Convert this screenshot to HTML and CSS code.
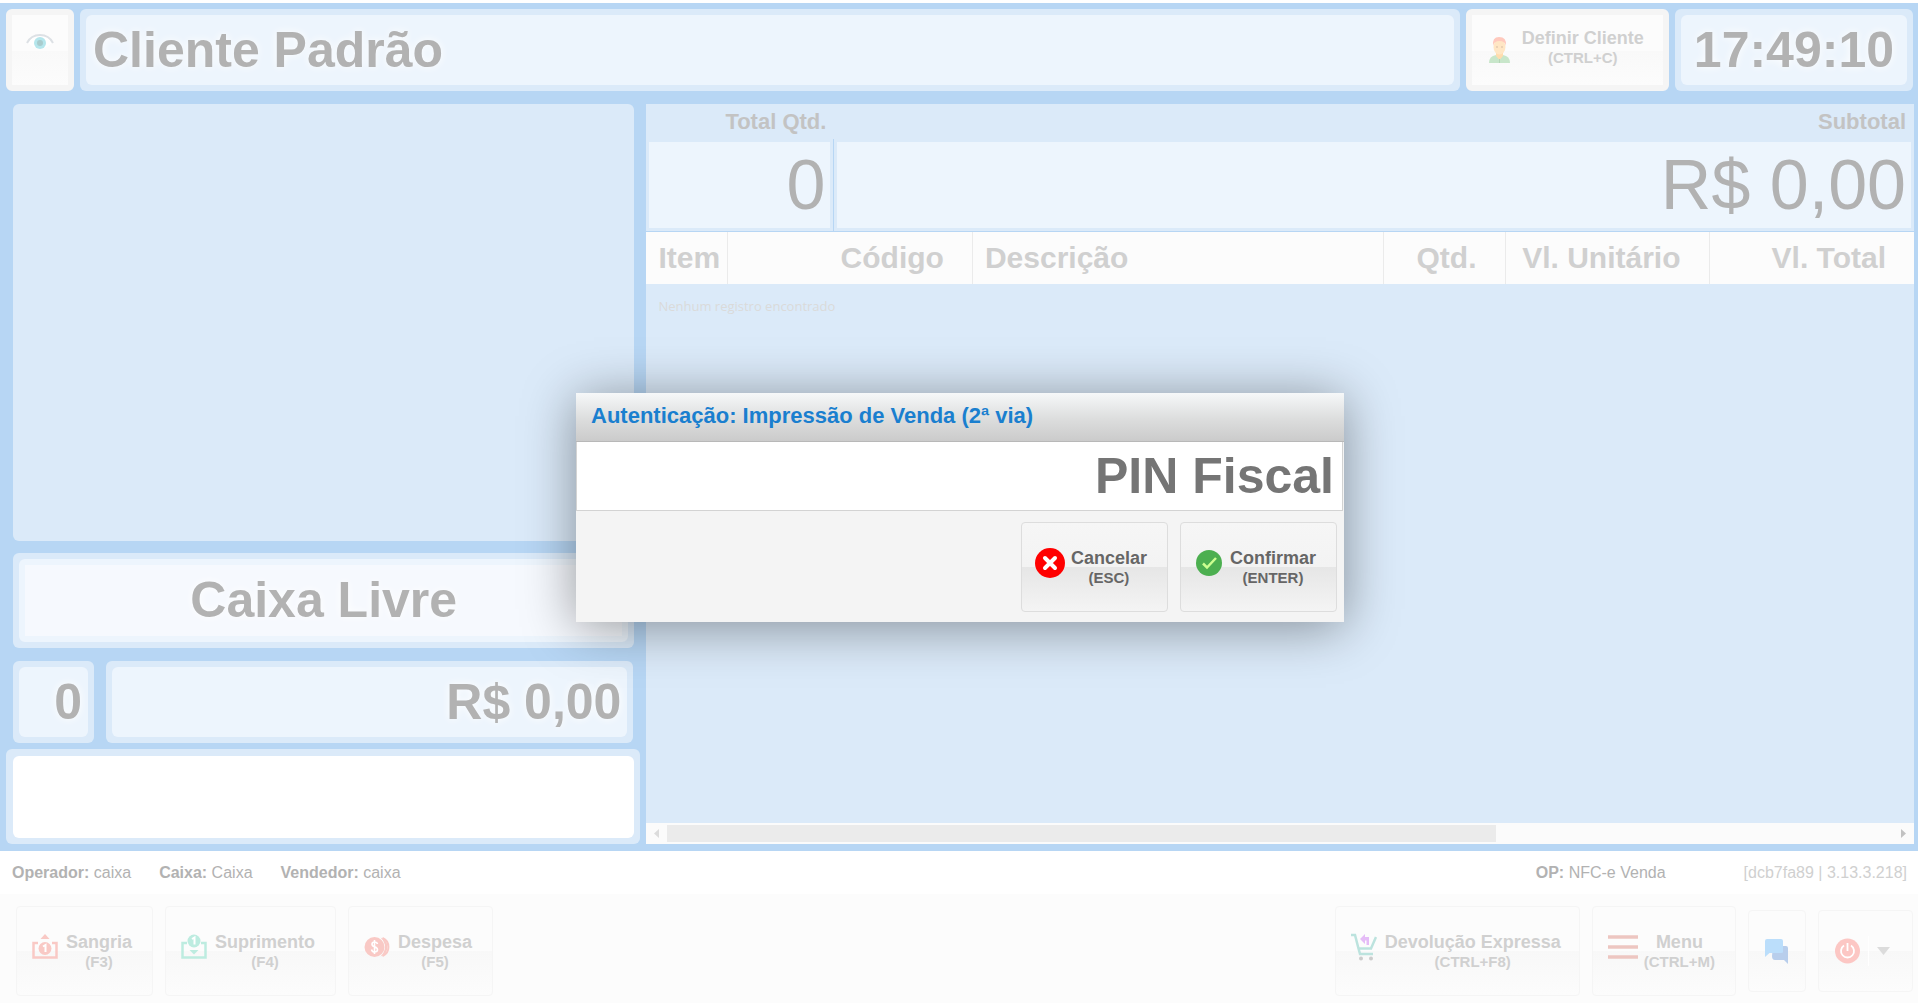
FILE: index.html
```html
<!DOCTYPE html>
<html lang="pt-BR">

<head>
    <meta charset="UTF-8">
    <meta name="viewport" content="width=device-width, initial-scale=1.0">
    <title>Caixa</title>
    <link rel="stylesheet" href="styles.css">
</head>

<body>
    <div id="pdv">
        <header class="topo">
            <button class="btnTopo btnOlho" aria-label="Exibir">
                <svg width="28" height="18" viewBox="0 0 28 18">
                    <path d="M1 9Q14 -6 27 9Q14 22 1 9Z" fill="#fff" />
                    <path d="M1 10Q5 2 14 2T27 10" fill="none" stroke="#dde1e5" stroke-width="2" />
                    <circle cx="14" cy="10" r="6" fill="#b5e6ec" />
                    <circle cx="14" cy="10" r="3" fill="#a9cccd" />
                </svg>
            </button>
            <div class="caixa cliente"><div>Cliente Padrão</div></div>
            <button class="btnTopo">
                <svg width="21" height="26" viewBox="0 0 21 26">
                    <path d="M0 26Q0 19 7 18H14Q21 19 21 26Z" fill="#c8e6ca" />
                    <path d="M7 15H14V19L10.500 23L7 19Z" fill="#ffdcae" />
                    <path d="M10.500 22V26" stroke="#b5d5b6" />
                    <ellipse cx="10.500" cy="10" rx="6" ry="7.500" fill="#ffe6c4" />
                    <path d="M4 9Q3 0 10 0Q18 0 17 9Q16 4 10.500 4Q5 4 4 9Z" fill="#ffc9bd" />
                    <path d="M8 9V11M13 9V11" stroke="#d8bda5" />
                </svg>
                <span class="rotulo">Definir Cliente<small>(CTRL+C)</small></span>
            </button>
            <div class="caixa relogio"><div>17:49:10</div></div>
        </header>

        <main class="conteudo">
            <section class="esquerda">
                <div class="painel"></div>
                <div class="caixa estado"><div>Caixa Livre</div></div>
                <div class="valores">
                    <div class="caixa quantidade"><div>0</div></div>
                    <div class="caixa valor"><div>R$ 0,00</div></div>
                </div>
                <div class="moldura">
                    <input class="entrada" type="text" aria-label="Código do produto">
                </div>
            </section>

            <section class="direita">
                <div class="totais">
                    <div class="rotuloTotal">Total Qtd.</div>
                    <div class="rotuloTotal">Subtotal</div>
                    <div class="total separador"><div>0</div></div>
                    <div class="total"><div>R$ 0,00</div></div>
                </div>
                <table class="itens">
                    <colgroup>
                        <col class="colItem">
                        <col class="colCodigo">
                        <col class="colDescricao">
                        <col class="colQtd">
                        <col class="colUnitario">
                        <col class="colTotal">
                    </colgroup>
                    <thead>
                        <tr>
                            <th class="texto">Item</th>
                            <th>Código</th>
                            <th class="texto">Descrição</th>
                            <th>Qtd.</th>
                            <th>Vl. Unitário</th>
                            <th>Vl. Total</th>
                        </tr>
                    </thead>
                    <tbody>
                        <tr>
                            <td colspan="6">Nenhum registro encontrado</td>
                        </tr>
                    </tbody>
                </table>
                <div class="rolagem">
                    <svg width="21" height="21" viewBox="0 0 21 21"><path d="M13 6V15L8 10.500Z" fill="#dcdcdc" /></svg>
                    <div class="trilho"><div class="polegar"></div></div>
                    <svg width="21" height="21" viewBox="0 0 21 21"><path d="M8 6V15L13 10.500Z" fill="#c2c2c2" /></svg>
                </div>
            </section>
        </main>

        <div class="info">
            <span><b>Operador:</b> caixa</span>
            <span><b>Caixa:</b> Caixa</span>
            <span><b>Vendedor:</b> caixa</span>
            <span class="operacao"><b>OP:</b> NFC-e Venda</span>
            <span class="versao">[dcb7fa89 | 3.13.3.218]</span>
        </div>

        <footer class="rodape">
            <button class="btn">
                <svg width="26" height="26" viewBox="0 0 26 26">
                    <path d="M6 9H1.500V23.500H24.500V9H20" fill="none" stroke="#f9c9c5" stroke-width="2.500" />
                    <path d="M8.500 5L13 0L17.500 5Z" fill="#f9c9c5" />
                    <circle cx="13" cy="14.500" r="6.500" fill="#f9c9c5" />
                    <path d="M11 12.500L13.500 11V18" fill="none" stroke="#fff" stroke-width="2" />
                </svg>
                <span class="rotulo">Sangria<small>(F3)</small></span>
            </button>
            <button class="btn">
                <svg width="26" height="26" viewBox="0 0 26 26">
                    <path d="M6 9H1.500V23.500H24.500V9H20" fill="none" stroke="#bdece0" stroke-width="2.500" />
                    <circle cx="13" cy="7" r="6.500" fill="#bdece0" />
                    <path d="M11 5L13.500 3.500V10.500" fill="none" stroke="#fff" stroke-width="2" />
                    <path d="M8.500 16H17.500L13 20.500Z" fill="#bdece0" />
                </svg>
                <span class="rotulo">Suprimento<small>(F4)</small></span>
            </button>
            <button class="btn">
                <svg width="26" height="26" viewBox="0 0 26 26">
                    <path d="M16.500 3.500A10 10 0 0 1 16.500 22.500Q21 18 21 13T16.500 3.500Z" fill="#f9c9c5" />
                    <path d="M18.500 4A9.800 9.800 0 0 1 18.500 22" fill="none" stroke="#f9c9c5" stroke-width="2" />
                    <circle cx="10.500" cy="13" r="10" fill="#f9c9c5" />
                    <path d="M13.500 10Q13 8 10.500 8Q8 8 8 10.200Q8 12 10.500 12.800Q13.500 13.600 13.500 15.800Q13.500 18 10.500 18Q8 18 7.500 15.500M10.500 6V20" fill="none" stroke="#fff" stroke-width="1.600" />
                </svg>
                <span class="rotulo">Despesa<small>(F5)</small></span>
            </button>
            <button class="btn btnDevolucao">
                <svg width="26" height="28" viewBox="0 0 26 28">
                    <path d="M0 2H4L7.500 15.500H20L25 4M7.500 15.500L9 21H22" fill="none" stroke="#bce3de" stroke-width="2.500" />
                    <path d="M9 6L14 1V4H18V12H15.500V7.500H14V11Z" fill="#e5bcf7" />
                    <circle cx="10" cy="25.500" r="2" fill="#ccc" />
                    <circle cx="20" cy="25.500" r="2" fill="#ccc" />
                </svg>
                <span class="rotulo">Devolução Expressa<small>(CTRL+F8)</small></span>
            </button>
            <button class="btn btnMenu">
                <svg width="30" height="28" viewBox="0 0 30 28">
                    <path d="M0 4H30M0 14H30M0 24H30" stroke="#edc6c1" stroke-width="3.500" />
                </svg>
                <span class="rotulo">Menu<small>(CTRL+M)</small></span>
            </button>
            <button class="btn btnPequeno btnChat" aria-label="Mensagens">
                <svg width="24" height="26" viewBox="0 0 24 26">
                    <path d="M8 8H21Q23 8 23 10V26L19 22H10Q7 22 7 18Z" fill="#b8ceec" />
                    <path d="M2 1H16Q18 1 18 3V14Q18 15 16 15H4.500L0 19V3Q0 1 2 1Z" fill="#bbdefb" />
                </svg>
            </button>
            <button class="btn btnPequeno btnSair" aria-label="Sair">
                <svg width="25" height="26" viewBox="0 0 25 26">
                    <circle cx="12.500" cy="13" r="12.500" fill="#fcc7c4" />
                    <path d="M9 7.500A6.500 6.500 0 1 0 16 7.500M12.500 5V13" fill="none" stroke="#fff" stroke-width="1.800" />
                </svg>
                <span class="divisor"></span>
                <svg width="13" height="8" viewBox="0 0 13 8"><path d="M0 0H13L6.500 8Z" fill="#dcdcdc" /></svg>
            </button>
        </footer>
    </div>

    <div class="dialogo" role="dialog" aria-labelledby="tituloDialogo">
        <div class="titulo" id="tituloDialogo">Autenticação: Impressão de Venda (2ª via)</div>
        <input class="pin" type="text" placeholder="PIN Fiscal" aria-label="PIN Fiscal">
        <div class="acoes">
            <button class="btn btnAcao">
                <svg width="30" height="30" viewBox="0 0 30 30">
                    <circle cx="15" cy="15" r="15" fill="#f00" />
                    <path d="M10 10L20 20M20 10L10 20" stroke="#fff" stroke-width="4" stroke-linecap="round" />
                </svg>
                <span class="rotulo">Cancelar<small>(ESC)</small></span>
            </button>
            <button class="btn btnAcao">
                <svg width="30" height="30" viewBox="0 0 30 30">
                    <circle cx="15" cy="15" r="13" fill="#4caf50" />
                    <path d="M9 15.500L13 19.500L22 10" fill="none" stroke="#ccff90" stroke-width="2.500" />
                </svg>
                <span class="rotulo">Confirmar<small>(ENTER)</small></span>
            </button>
        </div>
    </div>
</body>

</html>
```
FILE: styles.css
```css
* {
    box-sizing: border-box;
}

body {
    margin: 0;
    font-family: "Liberation Sans", Arial, sans-serif;
    color: #b2b2b2;
    background-color: #fff;
}

button,
input {
    font-family: inherit;
    margin: 0;
}

svg {
    display: block;
    flex: none;
}

#pdv {
    display: flex;
    flex-direction: column;
    height: 100vh;
    padding-top: 3px;
    overflow: hidden;
}

/* topo */
.topo {
    display: flex;
    gap: 6px;
    padding: 6px 5px 13px 6px;
    background-color: #b7d6f4;
}

.caixa {
    padding: 6px;
    border-radius: 6px;
    background-color: #dbeaf9;
    font-size: 50px;
    font-weight: bold;
    line-height: 70px;
    text-shadow: 0 0 8px #fff;
    white-space: nowrap;
}

.caixa div {
    height: 70px;
    border-radius: 6px;
    background-color: #edf5fd;
}

.cliente {
    flex: 1;
}

.cliente div {
    padding-left: 7px;
}

.relogio div {
    padding: 0 13px;
}

.btnTopo {
    display: flex;
    align-items: center;
    gap: 12px;
    height: 82px;
    padding: 0 19px 0 17px;
    border: 6px solid #f5f5f5;
    border-radius: 6px;
    background: linear-gradient(#fcfcfc 52%, #f9f9f9 52%, #fcfcfc);
}

.btnTopo .rotulo {
    padding-bottom: 5px;
}

.btnOlho {
    padding: 0 14px 16px;
}

.rotulo {
    color: #d0d0d0;
    font-size: 18px;
    font-weight: bold;
    line-height: 20px;
    text-align: center;
    white-space: nowrap;
}

.rotulo small {
    display: block;
    font-size: 15px;
}

/* conteudo */
.conteudo {
    flex: 1;
    display: flex;
    gap: 6px;
    min-height: 0;
    padding: 0 4px 7px 6px;
    background-color: #b7d6f4;
}

.esquerda {
    display: flex;
    flex-direction: column;
    width: 33.25%;
}

.painel {
    flex: 1;
    margin: 0 6px 12px 7px;
    border-radius: 6px;
    background-color: #dbeaf9;
}

.estado {
    margin: 0 6px 13px 7px;
    text-align: center;
}

.estado div {
    height: 83px;
    border: 6px solid #edf5fd;
    background-color: #f6f9fe;
}

.valores {
    display: flex;
    gap: 12px;
    margin: 0 7px 6px;
    text-align: right;
}

.valores div div {
    padding-right: 6px;
}

.quantidade {
    width: 81px;
}

.valor {
    flex: 1;
}

.moldura {
    height: 95px;
    padding: 7px 6px 6px 7px;
    border-radius: 6px;
    background-color: #dbeaf9;
}

.entrada {
    display: block;
    width: 100%;
    height: 100%;
    border: none;
    border-radius: 6px;
    background-color: #fff;
    font-size: 50px;
    outline: none;
}

.direita {
    flex: 1;
    display: flex;
    flex-direction: column;
    min-width: 0;
    background-color: #dbeaf9;
}

.totais {
    display: grid;
    grid-template-columns: 188px 1fr;
    border-bottom: 1px solid #b7d6f4;
    text-align: right;
}

.rotuloTotal {
    height: 35px;
    padding: 0 8px;
    color: #c3c3c3;
    font-size: 22px;
    font-weight: bold;
    line-height: 35px;
}

.total {
    padding: 3px;
    font-size: 70px;
    line-height: 86px;
}

.total div {
    height: 86px;
    padding-right: 5px;
    background-color: #edf5fd;
}

.separador {
    border-right: 1px solid #b7d6f4;
}

.itens {
    width: 100%;
    table-layout: fixed;
    border-collapse: collapse;
}

.itens th {
    height: 52px;
    padding: 0 28px 0 0;
    border-right: 1px solid #ebebeb;
    background-color: #fcfcfc;
    color: #d0d0d0;
    font-size: 30px;
    text-align: right;
    white-space: nowrap;
}

.itens th:last-child {
    border-right: none;
}

.itens .texto {
    padding: 0 0 0 12px;
    text-align: left;
}

.itens td {
    padding: 12px;
    color: #dadada;
    font-family: "Open Sans", "Noto Sans", sans-serif;
    font-size: 13px;
    line-height: 20px;
}

.colItem {
    width: 81px;
}

.colCodigo {
    width: 245px;
}

.colQtd {
    width: 122px;
}

.colUnitario {
    width: 204px;
}

.colTotal {
    width: 205px;
}

.rolagem {
    display: flex;
    height: 21px;
    margin-top: auto;
    background-color: #fbfbfb;
}

.trilho {
    flex: 1;
    padding: 2px 0;
}

.polegar {
    width: 67.6%;
    height: 17px;
    background-color: #ebebeb;
}

/* barra de informacoes */
.info {
    display: flex;
    gap: 28px;
    height: 43px;
    padding: 0 11px 0 12px;
    font-size: 16px;
    line-height: 43px;
    white-space: nowrap;
}

.operacao {
    margin-left: auto;
}

.versao {
    margin-left: 50px;
    color: #d0d0d0;
}

/* rodape */
.rodape {
    display: flex;
    align-items: center;
    gap: 12px;
    height: 109px;
    padding: 4px 5px 0 16px;
    background-color: #fcfcfc;
}

.btn {
    display: flex;
    align-items: center;
    gap: 8px;
    height: 90px;
    padding: 0 20px 0 15px;
    border: 1px solid #f5f5f5;
    border-radius: 4px;
    background: linear-gradient(#fcfcfc 50%, #f8f8f8 50%, #fcfcfc);
}

.btn svg {
    margin-bottom: 8px;
}

.btn .rotulo {
    padding-top: 2px;
}

.btnDevolucao {
    margin-left: auto;
    padding-right: 18px;
}

.btnMenu {
    gap: 6px;
}

.btnPequeno {
    height: 82px;
}

.btnPequeno svg {
    margin-bottom: 0;
}

.btnChat {
    padding: 0 16px;
}

.btnSair {
    padding: 0 22px 0 16px;
}

.divisor {
    width: 1px;
    height: 30px;
    background-color: #fff;
}

/* dialogo de autenticacao */
.dialogo {
    position: absolute;
    top: 393px;
    left: 50%;
    width: 768px;
    margin-left: -383px;
    background-color: #f4f4f4;
    box-shadow: 0 5px 50px rgba(0, 0, 0, 0.4);
}

.titulo {
    height: 49px;
    padding-left: 15px;
    border-bottom: 1px solid #b8b8b8;
    background: linear-gradient(#f6f8f9, #dcdddd 55%, #cbcbcb);
    color: #1a7fcf;
    font-size: 22px;
    font-weight: bold;
    line-height: 46px;
}

.pin {
    display: block;
    width: 767px;
    height: 69px;
    padding: 0 8px;
    border: 1px solid #d3d3d3;
    border-top: none;
    background-color: #fff;
    font-size: 50px;
    font-weight: bold;
    text-align: right;
    outline: none;
}

.pin::placeholder {
    color: #757575;
}

.acoes {
    display: flex;
    justify-content: flex-end;
    gap: 12px;
    padding: 11px 7px 10px;
}

.btnAcao {
    gap: 6px;
    padding: 0 20px 0 13px;
    border-color: #dddddd;
    background: linear-gradient(#f6f6f6, #f3f3f3 50%, #e6e6e6 50%, #f4f4f4);
}

.btnAcao .rotulo {
    color: #666;
}
```
